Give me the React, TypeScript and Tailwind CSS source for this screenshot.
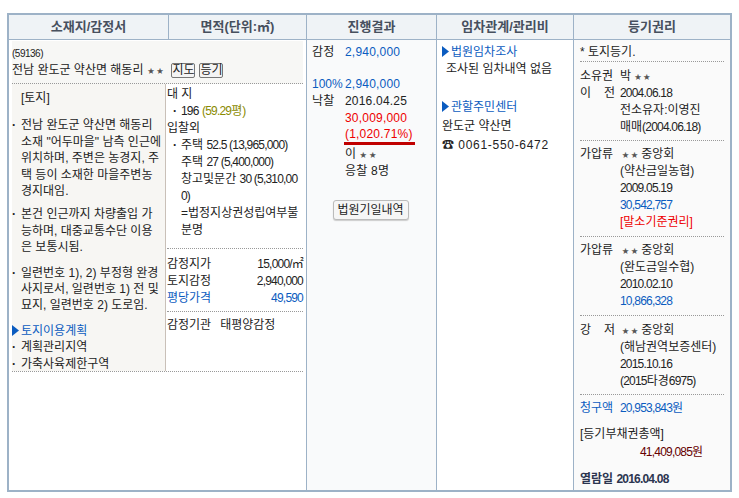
import React from 'react'

const Stars = () => <span className="text-[7px] text-[#555] align-[1px]">★ ★</span>

// digits in the reference are narrower than Liberation's
const N = ({ children }: { children: React.ReactNode }) => <span className="tracking-[-0.8px]">{children}</span>

const Arrow = () => (
  <svg width="7" height="11" viewBox="0 0 7 11" className="inline-block align-[-1px] mr-[2px]">
    <path d="M0 0 L7 5.5 L0 11 Z" fill="#0b5cc0" />
  </svg>
)

function Bullet({ children, className = '' }: { children: React.ReactNode; className?: string }) {
  return (
    <div className={`flex whitespace-nowrap ${className}`}>
      <span className="w-[9px] shrink-0 font-bold">·</span>
      <div>{children}</div>
    </div>
  )
}

function RightsRow({ label, children }: { label?: React.ReactNode; children: React.ReactNode }) {
  return (
    <div className="flex">
      <div className="w-[40px] shrink-0">{label}</div>
      <div className="flex-1 whitespace-nowrap">{children}</div>
    </div>
  )
}

function Creditor() {
  return (
    <span className="ml-[2px]">
      <Stars /> 중앙회
    </span>
  )
}

function LandColumn() {
  return (
    <div className="flex flex-col px-[3px] pt-[1px]">
      <div className="bg-[#f7f7f5] border-b border-dotted border-[#999] h-[43px] pt-[5px]">
        <div className="text-[10px] leading-[16px] tracking-[-0.5px]">(59136)</div>
        <div className="flex items-center h-[17px] whitespace-nowrap">
          <span>전남 완도군 약산면 해동리</span>
          <span className="ml-[4px]"><Stars /></span>
          <button className="ml-[8px] h-[15px] w-[24px] border border-[#777] rounded-[2px] bg-[#f4f4f4] text-[12px] leading-[13px]">지도</button>
          <button className="ml-[4px] h-[15px] w-[24px] border border-[#777] rounded-[2px] bg-[#f4f4f4] text-[12px] leading-[13px]">등기</button>
        </div>
      </div>
      <div className="flex h-[288px] border-b border-dotted border-[#999]">
        <div className="w-[154px] shrink-0 bg-[#f7f6f3] border-r border-[#c9c0b8] leading-[16.4px]">
          <div className="pl-[9px] pt-[6px]">[토지]</div>
          <Bullet className="mt-[11px]">
            <div>전남 완도군 약산면 해동리</div>
            <div>소재 "어두마을" 남측 인근에</div>
            <div>위치하며, 주변은 농경지, 주</div>
            <div>택 등이 소재한 마을주변농</div>
            <div>경지대임.</div>
          </Bullet>
          <Bullet className="mt-[7px]">
            <div>본건 인근까지 차량출입 가</div>
            <div>능하며, 대중교통수단 이용</div>
            <div>은 보통시됨.</div>
          </Bullet>
          <Bullet className="mt-[9px]">
            <div>일련번호 1), 2) 부정형 완경</div>
            <div>사지로서, 일련번호 1) 전 및</div>
            <div>묘지, 일련번호 2) 도로임.</div>
          </Bullet>
          <div className="mt-[9px] text-[#0b5cc0] whitespace-nowrap"><Arrow />토지이용계획</div>
          <Bullet>계획관리지역</Bullet>
          <Bullet>가축사육제한구역</Bullet>
        </div>
        <div className="flex-1 flex flex-col min-w-0 pl-[1px]">
          <div className="h-[165px] border-b border-dotted border-[#999] pt-[2px] whitespace-nowrap">
            <div>대 지</div>
            <div className="pl-[3px] flex">
              <span className="w-[10px] text-center font-bold">·</span>
              <span className="ml-[1px]"><N>196</N> <span className="text-[#8a8a00]"><N>(59.29</N>평)</span></span>
            </div>
            <div>입찰외</div>
            <div className="flex pl-[3px]">
              <span className="w-[10px] text-center font-bold">·</span>
              <div className="ml-[1px]">
                <div>주택 <N>52.5 (13,965,000)</N></div>
                <div>주택 <N>27 (5,400,000)</N></div>
                <div>창고및문간 <N>30 (5,310,00</N></div>
                <div><N>0)</N></div>
                <div>=법정지상권성립여부불</div>
                <div>분명</div>
              </div>
            </div>
          </div>
          <div className="h-[63px] border-b border-dotted border-[#999] pt-[7px]">
            <div className="flex justify-between"><span>감정지가</span><N>15,000/㎡</N></div>
            <div className="flex justify-between"><span>토지감정</span><N>2,940,000</N></div>
            <div className="flex justify-between text-[#0b5cc0]"><span>평당가격</span><N>49,590</N></div>
          </div>
          <div className="pt-[5px] flex gap-[9px]"><span>감정기관</span><span>태평양감정</span></div>
        </div>
      </div>
    </div>
  )
}

function ResultColumn() {
  return (
    <div className="h-full bg-[#f9fafb] pl-[5px] pt-[4px] tracking-[0.2px]">
      <div className="flex"><span className="w-[33px]">감정</span><span className="text-[#0b5cc0]">2,940,000</span></div>
      <div className="flex mt-[15px]"><span className="w-[33px] text-[#0b5cc0] tracking-normal">100%</span><span className="text-[#0b5cc0]">2,940,000</span></div>
      <div className="flex"><span className="w-[33px]">낙찰</span><span>2016.04.25</span></div>
      <div className="pl-[33px]">
        <div className="text-[#ee0000]">30,009,000</div>
        <div className="w-[71px] -ml-[1px] pl-[1px] text-[#ee0000] border-b-[3px] border-[#c00000] leading-[15px]">(1,020.71%)</div>
        <div className="mt-[1px]">이 <Stars /></div>
        <div>응찰 8명</div>
      </div>
      <div className="flex justify-center pr-[7px] mt-[20px]">
        <button className="w-[76px] h-[20px] border border-[#bbb] rounded-[3px] bg-[#f6f6f6] tracking-normal leading-[18px] shadow-[0_1px_1px_#ccc]">법원기일내역</button>
      </div>
    </div>
  )
}

function TenantColumn() {
  return (
    <div className="h-full bg-white pl-[5px] pt-[4px]">
      <div className="text-[#0b5cc0]"><Arrow />법원임차조사</div>
      <div className="pl-[4px]">조사된 임차내역 없음</div>
      <div className="mt-[21px] text-[#0b5cc0]"><Arrow />관할주민센터</div>
      <div className="mt-[2px]">완도군 약산면</div>
      <div className="mt-[2px] whitespace-nowrap">☎ <span className="ml-[1px] tracking-[0.7px]">0061-550-6472</span></div>
    </div>
  )
}

function RegistryColumn() {
  return (
    <div className="h-full bg-[#fafafa] px-[6px] pt-[4px]">
      <div className="border-b border-dotted border-[#999] h-[18px]">* 토지등기.</div>
      <div className="h-[79px] pt-[6px] border-b border-dotted border-[#999]">
        <RightsRow label="소유권">박 <Stars /></RightsRow>
        <RightsRow label={<span className="flex justify-between pr-[5px]"><span>이</span><span>전</span></span>}><N>2004.06.18</N></RightsRow>
        <RightsRow>전소유자:이영진</RightsRow>
        <RightsRow>매매<N>(2004.06.18)</N></RightsRow>
      </div>
      <div className="h-[96px] pt-[5px] border-b border-dotted border-[#999]">
        <RightsRow label="가압류"><Creditor /></RightsRow>
        <RightsRow>(약산금일농협)</RightsRow>
        <RightsRow><N>2009.05.19</N></RightsRow>
        <RightsRow><span className="text-[#0b5cc0]"><N>30,542,757</N></span></RightsRow>
        <RightsRow><span className="text-[#ee0000]">[말소기준권리]</span></RightsRow>
      </div>
      <div className="h-[79px] pt-[5px] border-b border-dotted border-[#999]">
        <RightsRow label="가압류"><Creditor /></RightsRow>
        <RightsRow>(완도금일수협)</RightsRow>
        <RightsRow><N>2010.02.10</N></RightsRow>
        <RightsRow><span className="text-[#0b5cc0]"><N>10,866,328</N></span></RightsRow>
      </div>
      <div className="h-[79px] pt-[6px] border-b border-dotted border-[#999]">
        <RightsRow label={<span className="flex justify-between pr-[5px]"><span>강</span><span>저</span></span>}><Creditor /></RightsRow>
        <RightsRow>(해남권역보증센터)</RightsRow>
        <RightsRow><N>2015.10.16</N></RightsRow>
        <RightsRow><N>(2015</N>타경<N>6975)</N></RightsRow>
      </div>
      <div className="pt-[5px] text-[#0b5cc0]">
        <RightsRow label="청구액"><N>20,953,843</N>원</RightsRow>
      </div>
      <div className="mt-[9px]">[등기부채권총액]</div>
      <div className="mt-[1px] pl-[60px] text-[#660000] whitespace-nowrap"><N>41,409,085</N>원</div>
      <div className="mt-[10px] font-bold text-[#2c3550]">열람일 <N>2016.04.08</N></div>
    </div>
  )
}

export default function App() {
  return (
    <div className="w-[739px] h-[498px] bg-white pt-[13px] pl-[7px] font-['Liberation_Sans','Noto_Sans_CJK_KR',sans-serif] text-[12px] leading-[17px] text-[#222]">
      <div className="w-[725px] h-[479px] border-2 border-[#9db2c7] flex flex-col">
        <div className="grid grid-cols-[160px_138px_130px_137px_156px] h-[25px] bg-[#eff3f6] border-b border-[#9db2c7] text-[13px] font-bold text-[#47505e] text-center leading-[23px]">
          <div className="border-r border-[#9db2c7]">소재지/감정서</div>
          <div className="border-r border-[#9db2c7]">면적(단위:㎡)</div>
          <div className="border-r border-[#9db2c7]">진행결과</div>
          <div className="border-r border-[#9db2c7]">임차관계/관리비</div>
          <div>등기권리</div>
        </div>
        <div className="grid grid-cols-[298px_130px_137px_156px] flex-1 min-h-0">
          <div className="border-r border-[#9db2c7]"><LandColumn /></div>
          <div className="border-r border-[#9db2c7]"><ResultColumn /></div>
          <div className="border-r border-[#9db2c7]"><TenantColumn /></div>
          <RegistryColumn />
        </div>
      </div>
    </div>
  )
}
